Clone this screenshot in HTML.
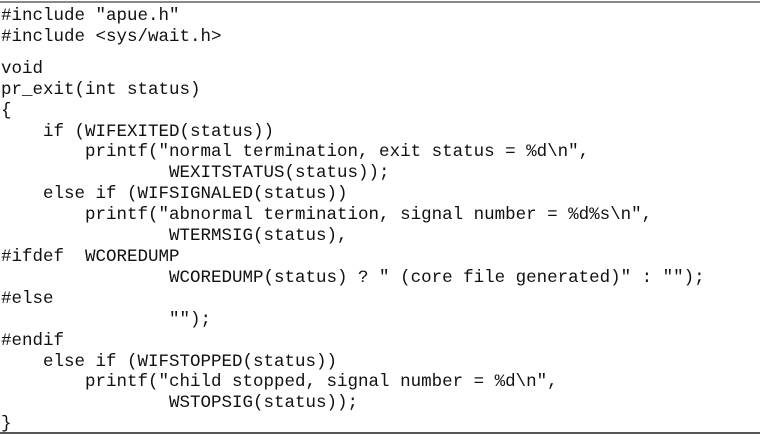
<!DOCTYPE html>
<html><head><meta charset="utf-8"><style>
html,body{margin:0;padding:0;background:#fff;width:760px;height:435px;overflow:hidden}
.top{position:absolute;left:0;top:1px;width:760px;height:2px;background:#888}
.bot{position:absolute;left:0;top:432px;width:760px;height:2px;background:#555}
pre{position:absolute;left:1px;top:6px;margin:0;font-family:"Liberation Mono",monospace;font-size:17.5px;line-height:20.9px;color:#111}
.gap{display:block;height:11px;line-height:11px}
</style></head><body>
<div class="top"></div>
<pre>#include "apue.h"
#include &lt;sys/wait.h&gt;
<span class="gap"></span>void
pr_exit(int status)
{
    if (WIFEXITED(status))
        printf("normal termination, exit status = %d\n",
                WEXITSTATUS(status));
    else if (WIFSIGNALED(status))
        printf("abnormal termination, signal number = %d%s\n",
                WTERMSIG(status),
#ifdef  WCOREDUMP
                WCOREDUMP(status) ? " (core file generated)" : "");
#else
                "");
#endif
    else if (WIFSTOPPED(status))
        printf("child stopped, signal number = %d\n",
                WSTOPSIG(status));
}</pre>
<div class="bot"></div>
</body></html>
